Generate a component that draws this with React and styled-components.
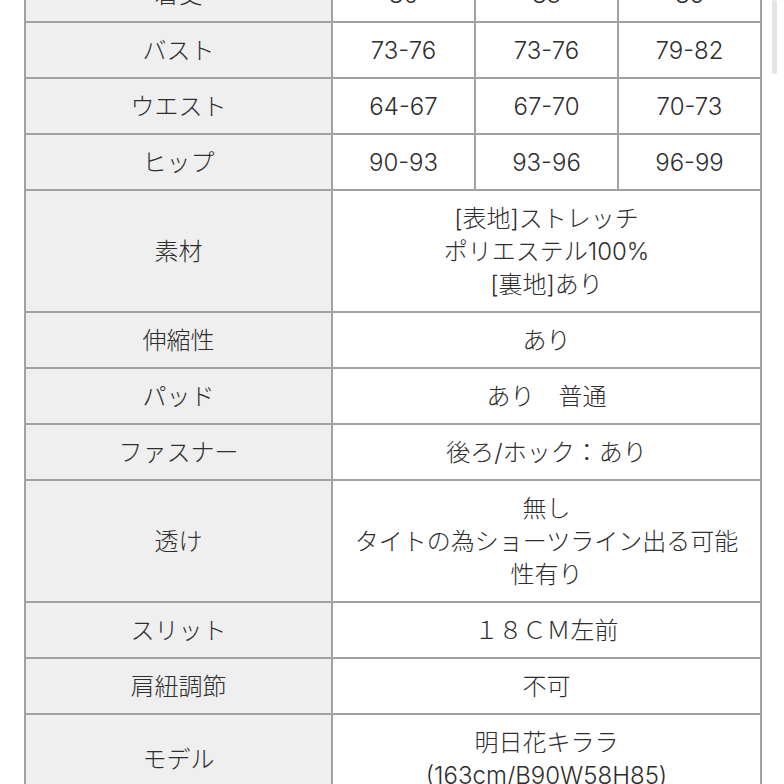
import styled, { createGlobalStyle } from "styled-components";

const GlobalStyle = createGlobalStyle`
    html, body {
        margin: 0;
        padding: 0;
        overflow: hidden;
        background: #ffffff;
        height: 784px;
    }
    body {
        font-family: Inter, "Noto Sans CJK JP", sans-serif;
    }
`

const Page = styled.div`
    width: 784px;
    height: 784px;
    overflow: hidden;
    position: relative;
    background: #fff;
`

const SpecTable = styled.table`
    border-collapse: collapse;
    margin: -35px 0 0 24px;
    width: 736px;
    table-layout: fixed;
    color: #2e2e2e;
    font-size: 24px;
    font-weight: 300;
    line-height: 33px;
`

const Col = styled.col`
    width: ${p => p.$wide ? '307px' : '143px'};
`

const Cell = styled.td`
    border: 2px solid #a2a2a2;
    padding: 11px 4px 10px;
    text-align: center;
    vertical-align: middle;
    background: ${p => p.$label ? '#efefef' : '#ffffff'};
    white-space: nowrap;
`

const Scrollbar = styled.div`
    position: absolute;
    top: 0;
    right: 7px;
    width: 5px;
    height: 74px;
    border-radius: 3px;
    background: #e4e4e4;
`

const sizeRows = [
    ['着丈', ['80', '83', '86']],
    ['バスト', ['73-76', '73-76', '79-82']],
    ['ウエスト', ['64-67', '67-70', '70-73']],
    ['ヒップ', ['90-93', '93-96', '96-99']],
]

const infoRows = [
    ['素材', ['[表地]ストレッチ', 'ポリエステル100%', '[裏地]あり']],
    ['伸縮性', ['あり']],
    ['パッド', ['あり　普通']],
    ['ファスナー', ['後ろ/ホック：あり']],
    ['透け', ['無し', 'タイトの為ショーツライン出る可能', '性有り']],
    ['スリット', ['１８ＣＭ左前']],
    ['肩紐調節', ['不可']],
    ['モデル', ['明日花キララ', '(163cm/B90W58H85)']],
]

const Lines = ({ lines }) => lines.map((line, i) => (
    <span key={i}>
        {line}
        {i < lines.length - 1 && <br />}
    </span>
))

export default function App() {
    return (
        <Page>
            <GlobalStyle />
            <SpecTable>
                <colgroup>
                    <Col $wide />
                    <Col />
                    <Col />
                    <Col />
                </colgroup>
                <tbody>
                    {sizeRows.map(([label, values]) => (
                        <tr key={label}>
                            <Cell $label>{label}</Cell>
                            {values.map((v, i) => <Cell key={i}>{v}</Cell>)}
                        </tr>
                    ))}
                    {infoRows.map(([label, lines]) => (
                        <tr key={label}>
                            <Cell $label>{label}</Cell>
                            <Cell colSpan={3}><Lines lines={lines} /></Cell>
                        </tr>
                    ))}
                </tbody>
            </SpecTable>
            <Scrollbar />
        </Page>
    )
}
